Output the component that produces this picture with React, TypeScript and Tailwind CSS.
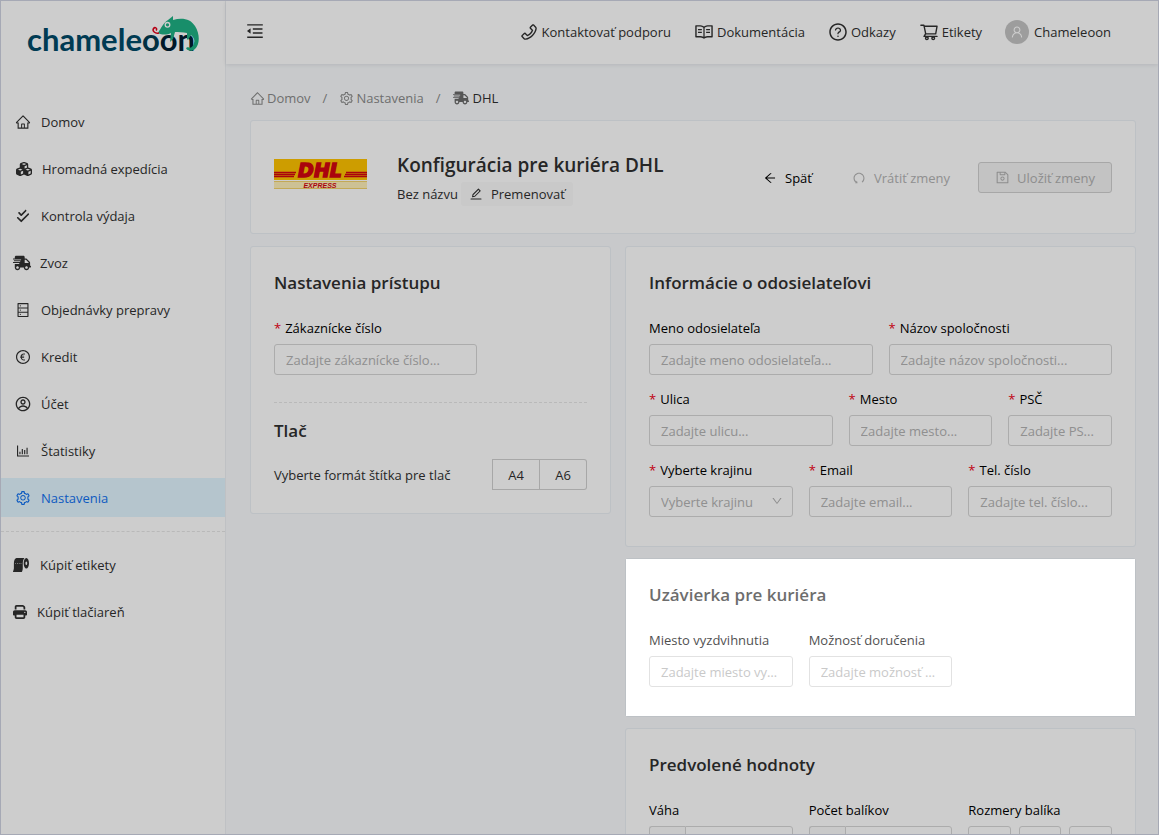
import type { ComponentType, ReactNode } from 'react';
import {
  AiOutlineArrowLeft,
  AiOutlineBarChart,
  AiOutlineDatabase,
  AiOutlineDown,
  AiOutlineEdit,
  AiOutlineEuroCircle,
  AiOutlineHome,
  AiOutlineMenuFold,
  AiOutlinePhone,
  AiOutlineQuestionCircle,
  AiOutlineRead,
  AiOutlineSave,
  AiOutlineSetting,
  AiOutlineShoppingCart,
  AiOutlineUndo,
  AiOutlineUser,
} from 'react-icons/ai';
import { FaShippingFast, FaToiletPaper } from 'react-icons/fa';
import { FaCheckDouble, FaCubes, FaPrint } from 'react-icons/fa6';
import { CgProfile } from 'react-icons/cg';

type IconType = ComponentType<{ className?: string }>;

interface MenuEntry {
  label: string;
  icon: IconType;
  iconClass?: string;
  rowClass?: string;
  active?: boolean;
}

const mainMenu: MenuEntry[] = [
  { label: 'Domov', icon: AiOutlineHome },
  { label: 'Hromadná expedícia', icon: FaCubes, rowClass: 'gap-[10px] pl-[15px]' },
  { label: 'Kontrola výdaja', icon: FaCheckDouble, iconClass: 'mx-px h-[14px] w-[14px]' },
  { label: 'Zvoz', icon: FaShippingFast, iconClass: 'h-4 w-[18px]', rowClass: 'gap-[9px] pl-[12px]' },
  { label: 'Objednávky prepravy', icon: AiOutlineDatabase },
  { label: 'Kredit', icon: AiOutlineEuroCircle },
  { label: 'Účet', icon: CgProfile },
  { label: 'Štatistiky', icon: AiOutlineBarChart },
  { label: 'Nastavenia', icon: AiOutlineSetting, active: true },
];

const shopMenu: MenuEntry[] = [
  { label: 'Kúpiť etikety', icon: FaToiletPaper, iconClass: 'h-4 w-4', rowClass: 'gap-[11px] pl-[12px]' },
  { label: 'Kúpiť tlačiareň', icon: FaPrint, iconClass: 'h-[14px] w-[14px]', rowClass: 'gap-[10px] pl-[12px]' },
];

const headerLinks: { label: string; icon: IconType }[] = [
  { label: 'Kontaktovať podporu', icon: AiOutlinePhone },
  { label: 'Dokumentácia', icon: AiOutlineRead },
  { label: 'Odkazy', icon: AiOutlineQuestionCircle },
  { label: 'Etikety', icon: AiOutlineShoppingCart },
];

function Logo() {
  return (
    <svg viewBox="0 0 180 48" className="h-12 w-[180px]">
      <text
        x="3"
        y="39"
        fontSize="31"
        fontWeight="700"
        strokeLinejoin="round"
        className="font-['Lato',sans-serif]"
      >
        <tspan fill="#004a68">chamele</tspan>
        <tspan fill="#003b52">o</tspan>
        <tspan fill="#001f33">on</tspan>
      </text>
      <path
        d="M134 21C137 16 140 10 144 8L149 4V8C158 5 167 7 171 14C176 22 176 32 171 37C168 40 163 39 162 36L164 35C166 37 169 35 170 31C171 28 170 26 167 23L164 28L163 27L163 21C159 20 154 20 151 20L149 27L146 30L147 21C143 23 138 23 134 21Z"
        fill="#1fb184"
      />
      <circle cx="143.500" cy="12.800" r="2.300" fill="#1fb184" stroke="#fff" strokeWidth="1.300" />
      <path
        d="M135 21C131 22 128 19 129.500 16.500C131 14.500 134 16.500 132 18.500"
        fill="none"
        stroke="#e3001b"
        strokeWidth="1.500"
      />
    </svg>
  );
}

function DhlLogo() {
  return (
    <svg viewBox="0 0 93 30" className="mt-[10px] h-[30px] w-[93px] shrink-0 self-start">
      <rect width="93" height="21" fill="#ffc400" />
      <rect y="22" width="93" height="8" fill="#fff0b8" />
      <path d="M0 22.500H93M0 29.500H93" stroke="#f3d36b" />
      <path d="M0 13.500H22M0 15.500H21M0 17.500H20M72 13.500H93M71 15.500H93M70 17.500H93" stroke="#d40511" strokeWidth="1.300" />
      <text
        x="46"
        y="18"
        textAnchor="middle"
        fontSize="19"
        fontWeight="700"
        fontStyle="italic"
        fill="#d40511"
        stroke="#d40511"
        strokeWidth="1.500"
        className="font-['DejaVu_Sans',sans-serif]"
      >
        DHL
      </text>
      <text
        x="46"
        y="29"
        textAnchor="middle"
        fontSize="7"
        fontWeight="700"
        fontStyle="italic"
        fill="#d40511"
        className="font-['Liberation_Sans',sans-serif]"
      >
        EXPRESS
      </text>
    </svg>
  );
}

function MenuItem({ label, icon: Icon, iconClass = 'h-4 w-4', rowClass = 'gap-[10px] pl-[14px]', active }: MenuEntry) {
  return (
    <li>
      <a
        href="#"
        className={`flex h-[39px] items-center ${rowClass} ${active ? 'bg-[#e1f6ff] text-[#1070f0]' : 'text-[#303030]'}`}
      >
        <Icon className={`shrink-0 ${iconClass}`} />
        <span>{label}</span>
      </a>
    </li>
  );
}

const headingClass = 'text-[17px] leading-6 font-[650]';

function Card({ title, children }: { title: string; children: ReactNode }) {
  return (
    <section className="rounded-[3px] border border-[#ebf0f6] bg-white px-[23px] pt-6 pb-[29px]">
      <h2 className={headingClass}>{title}</h2>
      {children}
    </section>
  );
}

const controlClass =
  'h-[31px] w-full min-w-0 truncate rounded-[3px] border border-[#d6d6d6] bg-white pr-[10px] pl-[11px] placeholder:text-[#b3b3b3]';

function Label({ id, text, required }: { id: string; text: string; required?: boolean }) {
  return (
    <label htmlFor={id} className="block leading-[22px] whitespace-nowrap text-black">
      {required && <span className="mr-1 text-[#f00014]">*</span>}
      {text}
    </label>
  );
}

function Field({ id, label, placeholder, required }: { id: string; label: string; placeholder: string; required?: boolean }) {
  return (
    <div className="flex min-w-0 flex-col gap-[5px]">
      <Label id={id} text={label} required={required} />
      <input id={id} type="text" placeholder={placeholder} className={controlClass} />
    </div>
  );
}

function AddonField({ id, label }: { id: string; label: string }) {
  return (
    <div className="flex min-w-0 flex-col gap-[5px]">
      <Label id={id} text={label} />
      <div className="flex">
        <span className="h-[31px] w-9 shrink-0 rounded-l-[3px] border border-r-0 border-[#d6d6d6] bg-[#fafafa]" />
        <input id={id} type="text" className="h-[31px] w-full min-w-0 rounded-r-[3px] border border-[#d6d6d6] px-[10px]" />
      </div>
    </div>
  );
}

export default function App() {
  return (
    <div className="flex h-screen overflow-hidden border border-[#a6a9b5] bg-[#f9fbfd] font-['Open_Sans','Noto_Sans',sans-serif] text-[13px] leading-[22px] text-[#303030]">
      <aside className="flex w-[225px] shrink-0 flex-col border-r border-[#eef1f4] bg-white">
        <a href="#" aria-label="chameleoon" className="mb-[42px] block pt-[11px] pl-[23px]">
          <Logo />
        </a>
        <nav>
          <ul className="flex flex-col gap-2 border-b border-dashed border-[#e6e6e6] pb-[14px]">
            {mainMenu.map((item) => (
              <MenuItem key={item.label} {...item} />
            ))}
          </ul>
          <ul className="flex flex-col gap-2 pt-[13px]">
            {shopMenu.map((item) => (
              <MenuItem key={item.label} {...item} />
            ))}
          </ul>
        </nav>
      </aside>

      <div className="flex min-w-0 flex-1 flex-col">
        <header className="flex h-[63px] shrink-0 items-center justify-between bg-white pr-[47px] pb-[2px] pl-[19px] shadow-[0_1px_4px_rgba(0,21,41,0.1)]">
          <button type="button" aria-label="Menu">
            <AiOutlineMenuFold className="mb-[2px] h-5 w-5" />
          </button>
          <nav className="flex items-center gap-[23px]">
            {headerLinks.map(({ label, icon: Icon }) => (
              <a key={label} href="#" className="flex items-center gap-[3px]">
                <Icon className="h-5 w-5" />
                {label}
              </a>
            ))}
            <a href="#" className="flex items-center gap-[5px]">
              <span className="flex h-6 w-6 items-center justify-center rounded-full bg-[#c4c4c4] text-white">
                <AiOutlineUser className="h-[14px] w-[14px]" />
              </span>
              Chameleoon
            </a>
          </nav>
        </header>

        <main className="pt-[23px] pr-[22px] pl-6">
          <nav className="mb-[11px] flex items-center gap-3 text-[#8a8a8a]">
            <a href="#" className="flex items-center gap-[2px]">
              <AiOutlineHome className="h-[15px] w-[15px]" />
              Domov
            </a>
            <span>/</span>
            <a href="#" className="flex items-center gap-[2px]">
              <AiOutlineSetting className="h-[15px] w-[15px]" />
              Nastavenia
            </a>
            <span>/</span>
            <span className="flex items-center gap-1 text-[#303030]">
              <FaShippingFast className="h-4 w-4 text-[#6a6a6a]" />
              DHL
            </span>
          </nav>

          <section className="mb-3 flex items-center rounded-[3px] border border-[#ebf0f6] bg-white px-[23px] pt-[28px] pb-[27px]">
            <DhlLogo />
            <div className="ml-[30px] flex-1">
              <h1 className="text-[19px] leading-8 font-[650]">Konfigurácia pre kuriéra DHL</h1>
              <div className="mt-px flex items-center gap-[3px]">
                Bez názvu
                <button type="button" className="flex h-6 items-center gap-2 rounded-[3px] bg-[#fafafa] px-2">
                  <AiOutlineEdit className="h-[14px] w-[14px]" />
                  Premenovať
                </button>
              </div>
            </div>
            <div className="flex items-center">
              <button type="button" className="mr-2 flex h-[31px] items-center gap-2 px-4 text-black">
                <AiOutlineArrowLeft className="h-[14px] w-[14px]" />
                Späť
              </button>
              <button type="button" disabled className="mr-3 flex h-[31px] items-center gap-2 px-4 text-[#b3b3b3]">
                <AiOutlineUndo className="h-[14px] w-[14px]" />
                Vrátiť zmeny
              </button>
              <button
                type="button"
                disabled
                className="flex h-[31px] items-center gap-[7px] rounded-[3px] border border-[#d0d0d0] bg-[#f3f3f3] px-4 text-[#b0b0b0]"
              >
                <AiOutlineSave className="h-[15px] w-[15px]" />
                Uložiť zmeny
              </button>
            </div>
          </section>

          <div className="grid grid-cols-[361fr_511fr] items-start gap-x-[14px]">
            <section className="rounded-[3px] border border-[#ebf0f6] bg-white px-[23px] pt-6 pb-[23px]">
              <h2 className={headingClass}>Nastavenia prístupu</h2>
              <div className="mt-[22px] w-[65%]">
                <Field id="customer" label="Zákaznícke číslo" placeholder="Zadajte zákaznícke číslo..." required />
              </div>
              <hr className="mt-[27px] border-dashed border-[#e6e6e6]" />
              <h2 className={`mt-4 ${headingClass}`}>Tlač</h2>
              <div className="mt-4 flex items-center justify-between">
                <span>Vyberte formát štítka pre tlač</span>
                <div className="flex">
                  <button type="button" className="h-[31px] w-12 border border-[#d0d0d0]">
                    A4
                  </button>
                  <button type="button" className="h-[31px] w-[47px] rounded-r-[3px] border border-l-0 border-[#d0d0d0]">
                    A6
                  </button>
                </div>
              </div>
            </section>

            <div className="flex min-w-0 flex-col gap-[11px]">
              <Card title="Informácie o odosielateľovi">
                <div className="mt-[22px] flex flex-col gap-[13px]">
                  <div className="grid grid-cols-2 gap-4">
                    <Field id="sender" label="Meno odosielateľa" placeholder="Zadajte meno odosielateľa..." />
                    <Field id="company" label="Názov spoločnosti" placeholder="Zadajte názov spoločnosti..." required />
                  </div>
                  <div className="grid grid-cols-[184fr_144fr_104fr] gap-4">
                    <Field id="street" label="Ulica" placeholder="Zadajte ulicu..." required />
                    <Field id="city" label="Mesto" placeholder="Zadajte mesto..." required />
                    <Field id="zip" label="PSČ" placeholder="Zadajte PS..." required />
                  </div>
                  <div className="grid grid-cols-3 gap-4">
                    <div className="flex min-w-0 flex-col gap-[5px]">
                      <Label id="country" text="Vyberte krajinu" required />
                      <div className="relative">
                        <select id="country" className={`${controlClass} appearance-none text-[#b3b3b3]`}>
                          <option>Vyberte krajinu</option>
                        </select>
                        <AiOutlineDown className="pointer-events-none absolute top-[9px] right-[10px] h-3 w-3 text-[#b0b0b0]" />
                      </div>
                    </div>
                    <Field id="email" label="Email" placeholder="Zadajte email..." required />
                    <Field id="phone" label="Tel. číslo" placeholder="Zadajte tel. číslo..." required />
                  </div>
                </div>
              </Card>

              <section className="rounded-[3px] border border-[#ebf0f6] bg-white">
                <div className="relative z-10 bg-white px-[23px] pt-6 pb-[29px] shadow-[0_0_0_4000px_rgba(0,0,0,0.196)]">
                  <div className="opacity-70">
                    <h2 className={headingClass}>Uzávierka pre kuriéra</h2>
                    <div className="mt-[22px] grid grid-cols-3 gap-4">
                      <Field id="pickup" label="Miesto vyzdvihnutia" placeholder="Zadajte miesto vyzdvihnutia..." />
                      <Field id="delivery" label="Možnosť doručenia" placeholder="Zadajte možnosť doručenia..." />
                    </div>
                  </div>
                </div>
              </section>

              <Card title="Predvolené hodnoty">
                <div className="mt-[22px] grid grid-cols-3 gap-4">
                  <AddonField id="weight" label="Váha" />
                  <AddonField id="count" label="Počet balíkov" />
                  <div className="flex min-w-0 flex-col gap-[5px]">
                    <Label id="length" text="Rozmery balíka" />
                    <div className="grid grid-cols-3 gap-2">
                      <input id="length" type="text" className={controlClass} />
                      <input aria-label="Šírka" type="text" className={controlClass} />
                      <input aria-label="Výška" type="text" className={controlClass} />
                    </div>
                  </div>
                </div>
              </Card>
            </div>
          </div>
        </main>
      </div>
    </div>
  );
}
